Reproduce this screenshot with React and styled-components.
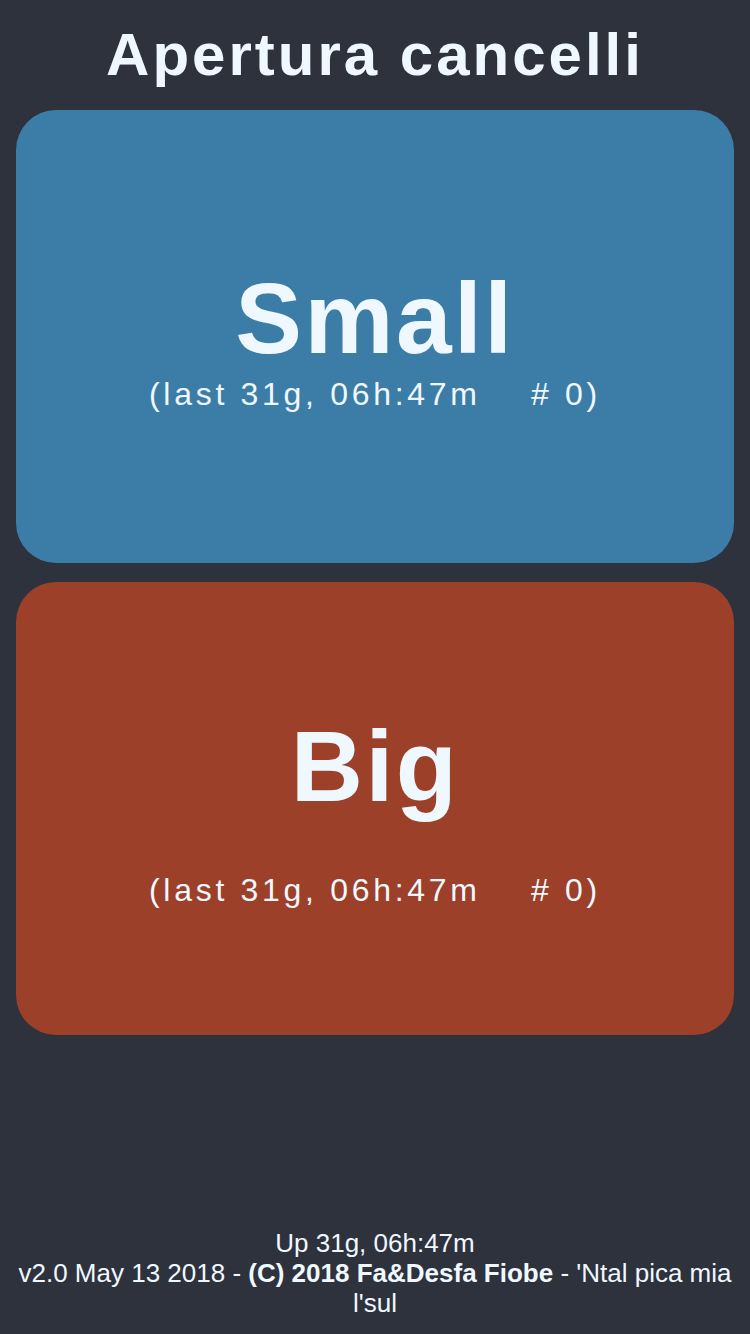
import React from 'react';
import styled, { createGlobalStyle } from 'styled-components';

const GlobalStyle = createGlobalStyle`
  html, body {
    margin: 0;
    padding: 0;
    background-color: #2d323c;
  }
  body {
    font-family: 'Liberation Sans', Arial, sans-serif;
    color: #f0f8ff;
  }
`;

export const Page = styled.div`
  min-height: 100vh;
  display: flex;
  flex-direction: column;
  box-sizing: border-box;
  padding: 20px 16px 16px;
`;

export const Title = styled.h1`
  margin: 0 0 21px;
  font-size: 60px;
  font-weight: 700;
  letter-spacing: 3px;
  text-align: center;
  line-height: 69px;
`;

export const GateButton = styled.div`
  height: 453px;
  border-radius: 40px;
  background-color: ${(props) => props.color};
  display: flex;
  flex-direction: column;
  align-items: center;
  justify-content: center;
  cursor: pointer;
  & + & {
    margin-top: 19px;
  }
`;

export const GateName = styled.div`
  font-size: 100px;
  font-weight: 700;
  letter-spacing: 2.5px;
  line-height: 115px;
  margin-bottom: ${(props) => props.gap}px;
`;

export const LastInfo = styled.div`
  font-size: 32px;
  letter-spacing: 3.7px;
  line-height: 37px;
  white-space: pre;
`;

export const Footer = styled.footer`
  margin-top: auto;
  text-align: center;
  font-size: 26px;
  line-height: 30px;
`;

const gates = [
  { name: 'Small', color: '#3c7da7', gap: 0 },
  { name: 'Big', color: '#9c4029', gap: 48 },
];

export default function App() {
  const last = '(last 31g, 06h:47m\u00a0\u00a0\u00a0\u00a0# 0)';
  return (
    <>
      <GlobalStyle />
      <Page>
        <Title>Apertura cancelli</Title>
        {gates.map((g) => (
          <GateButton key={g.name} color={g.color}>
            <GateName gap={g.gap}>{g.name}</GateName>
            <LastInfo>{last}</LastInfo>
          </GateButton>
        ))}
        <Footer>
          Up 31g, 06h:47m
          <br />
          v2.0 May 13 2018 - <b>(C) 2018 Fa&amp;Desfa Fiobe</b> - 'Ntal pica mia l'sul
        </Footer>
      </Page>
    </>
  );
}
